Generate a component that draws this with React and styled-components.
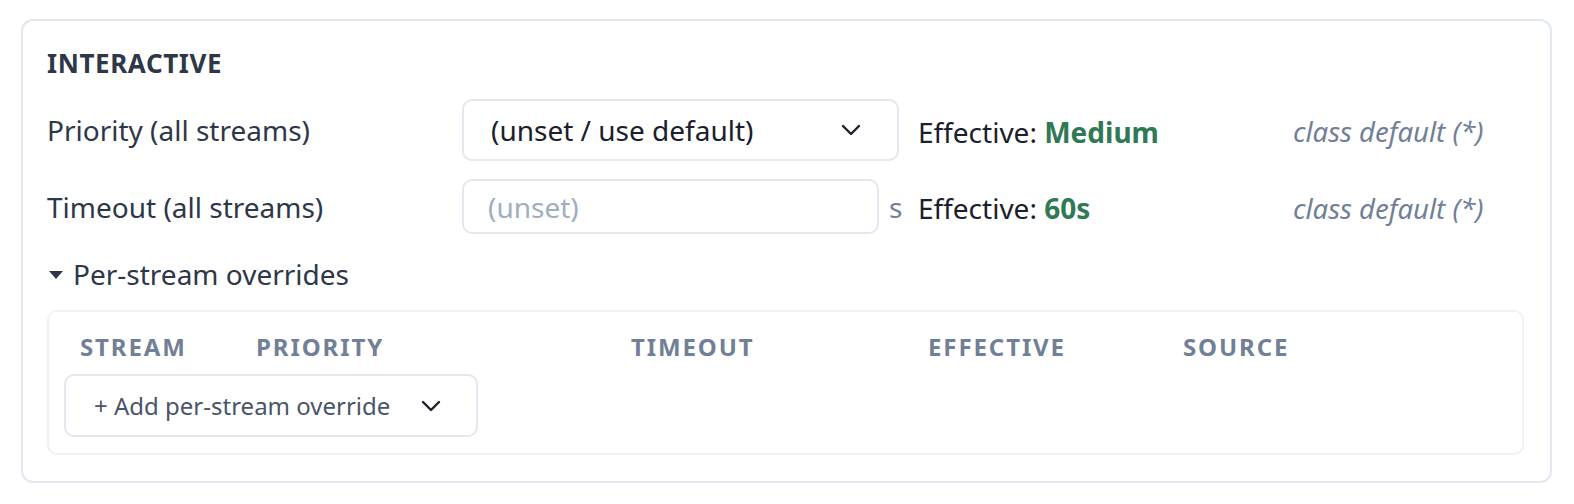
import React from "react";
import styled, { createGlobalStyle } from "styled-components";

const GlobalStyle = createGlobalStyle`
  html, body { margin: 0; padding: 0; background: #ffffff; }
  body { font-family: "Noto Sans", "Open Sans", sans-serif; color: #2d3748; }
  * { box-sizing: border-box; }
`;

const Page = styled.div`
  padding: 19px 22px 0 21px;
`;

const Card = styled.section`
  border: 2px solid #e2e8f0;
  border-radius: 12px;
  padding: 24px 26px 26px 24px;
  background: #fff;
`;

const Heading = styled.h3`
  margin: 0 0 18px 0;
  font-size: 26px;
  line-height: 36px;
  font-weight: 700;
  letter-spacing: 0.6px;
  color: #2d3748;
`;

const FieldGrid = styled.div`
  display: grid;
  grid-template-columns: 396px 437px 356px auto;
  column-gap: 19px;
  row-gap: 18px;
  align-items: center;
`;

const Label = styled.div`
  font-size: 28px;
  line-height: 40px;
  color: #2d3748;
`;

const SelectBox = styled.div`
  height: 62px;
  border: 2px solid #e2e8f0;
  border-radius: 10px;
  display: flex;
  align-items: center;
  justify-content: space-between;
  padding: 0 36px 0 27px;
  font-size: 28px;
  color: #1a202c;
  background: #fff;
`;

const InputWrap = styled.div`
  display: flex;
  align-items: center;
  gap: 10px;
`;

const TextInput = styled.input`
  width: 417px;
  height: 55px;
  border: 2px solid #e2e8f0;
  border-radius: 10px;
  padding: 0 24px;
  font-family: inherit;
  font-size: 28px;
  color: #1a202c;
  outline: none;
  &::placeholder { color: #a0aec0; }
`;

const Unit = styled.span`
  font-size: 28px;
  color: #718096;
`;

const Effective = styled.div`
  font-size: 28px;
  line-height: 40px;
  color: #1a202c;
  white-space: nowrap;
  padding-top: 3px;
`;

const EffValue = styled.span`
  font-weight: 700;
  color: #2f7a55;
`;

const Source = styled.div`
  font-size: 27.5px;
  font-style: italic;
  color: #718096;
  white-space: nowrap;
  padding-top: 3px;
`;

const Toggle = styled.div`
  margin-top: 20px;
  display: flex;
  align-items: center;
  gap: 10px;
  font-size: 28px;
  line-height: 40px;
  color: #2d3748;
  padding-left: 2px;
`;

const Caret = styled.span`
  width: 0;
  height: 0;
  border-left: 7px solid transparent;
  border-right: 7px solid transparent;
  border-top: 8px solid #2d3748;
  margin-top: 2px;
`;

const OverridesBox = styled.div`
  margin-top: 16px;
  border: 2px solid #edf2f7;
  border-radius: 10px;
  padding: 19px 16px 16px 15px;
`;

const HeaderRow = styled.div`
  display: grid;
  grid-template-columns: 176px 375px 297px 255px auto;
  margin-bottom: 11px;
`;

const HeaderCell = styled.div`
  padding: 0 16px;
  font-size: 24px;
  line-height: 32px;
  font-weight: 700;
  letter-spacing: 1.9px;
  color: #718096;
`;

const AddButton = styled.div`
  width: 414px;
  height: 63px;
  border: 2px solid #e2e8f0;
  border-radius: 10px;
  display: flex;
  align-items: center;
  justify-content: space-between;
  padding: 0 35px 0 28px;
  font-size: 24px;
  color: #4a5568;
`;

const Chevron = () => (
  <svg width="20" height="12" viewBox="0 0 20 12" fill="none">
    <path d="M2 2 L10 10 L18 2" stroke="#1a202c" strokeWidth="2.4" strokeLinecap="round" strokeLinejoin="round" />
  </svg>
);

export default function App() {
  return (
    <>
      <GlobalStyle />
      <Page>
        <Card>
          <Heading>INTERACTIVE</Heading>
          <FieldGrid>
            <Label>Priority (all streams)</Label>
            <SelectBox>
              <span>(unset / use default)</span>
              <Chevron />
            </SelectBox>
            <Effective>
              Effective: <EffValue>Medium</EffValue>
            </Effective>
            <Source>class default (*)</Source>

            <Label>Timeout (all streams)</Label>
            <InputWrap>
              <TextInput placeholder="(unset)" />
              <Unit>s</Unit>
            </InputWrap>
            <Effective>
              Effective: <EffValue>60s</EffValue>
            </Effective>
            <Source>class default (*)</Source>
          </FieldGrid>

          <Toggle>
            <Caret />
            <span>Per-stream overrides</span>
          </Toggle>

          <OverridesBox>
            <HeaderRow>
              <HeaderCell>STREAM</HeaderCell>
              <HeaderCell>PRIORITY</HeaderCell>
              <HeaderCell>TIMEOUT</HeaderCell>
              <HeaderCell>EFFECTIVE</HeaderCell>
              <HeaderCell>SOURCE</HeaderCell>
            </HeaderRow>
            <AddButton>
              <span>+ Add per-stream override</span>
              <Chevron />
            </AddButton>
          </OverridesBox>
        </Card>
      </Page>
    </>
  );
}
